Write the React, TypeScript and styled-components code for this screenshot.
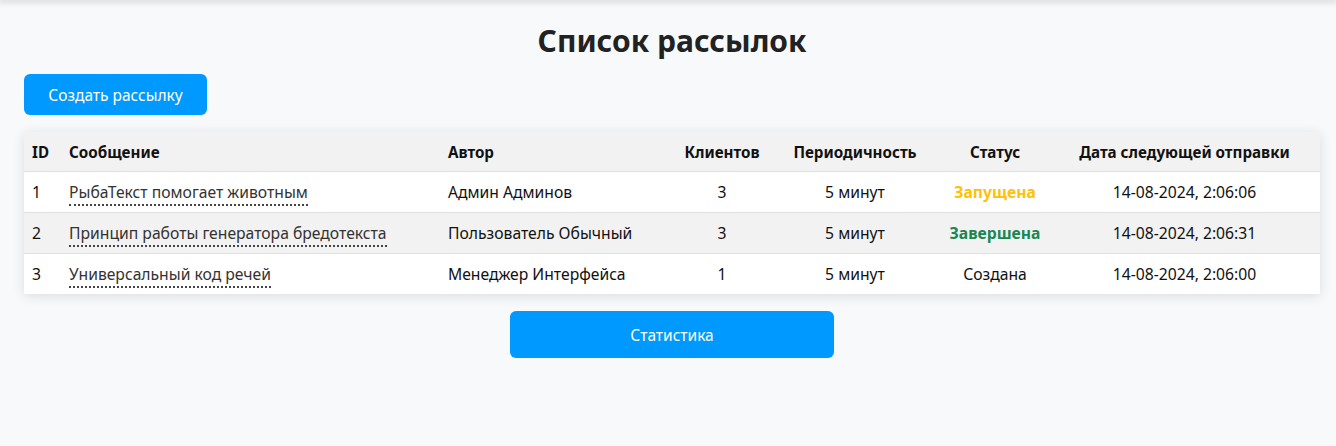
import React from "react";
import styled, { createGlobalStyle } from "styled-components";

const Global = createGlobalStyle`
  html, body { margin: 0; padding: 0; background: #f8f9fa; }
  body { font-family: "Noto Sans", "Open Sans", sans-serif; color: #212529; }
`;

const TopShadow = styled.div`
  height: 0;
  box-shadow: 0 0 6px 2px rgba(0, 0, 0, 0.18);
`;

const Page = styled.main`
  padding: 18px 16px 40px 24px;
  display: flex;
  flex-direction: column;
`;

const Title = styled.h1`
  margin: 0 0 10px;
  text-align: center;
  font-size: 30px;
  font-weight: 700;
  line-height: 46px;
  color: #222;
`;

const Button = styled.button<{ $wide?: boolean }>`
  border: none;
  border-radius: 6px;
  background: #0099ff;
  color: #fff;
  font-family: inherit;
  font-size: 15.5px;
  cursor: pointer;
  height: ${(p) => (p.$wide ? "47px" : "41px")};
  width: ${(p) => (p.$wide ? "324px" : "183px")};
  align-self: ${(p) => (p.$wide ? "center" : "flex-start")};
`;

const Table = styled.table`
  margin-top: 17px;
  width: 1296px;
  border-collapse: collapse;
  background: #fff;
  box-shadow: 0 2px 12px rgba(0, 0, 0, 0.12);
  font-size: 15.7px;
  table-layout: fixed;
`;

const Th = styled.th<{ $center?: boolean }>`
  background: #f2f2f2;
  height: 39px;
  padding: 0 8px;
  font-size: 15.2px;
  font-weight: 700;
  text-align: ${(p) => (p.$center ? "center" : "left")};
  border-bottom: 1px solid #dde0e4;
  color: #111;
`;

const Row = styled.tr<{ $alt?: boolean }>`
  background: ${(p) => (p.$alt ? "#f2f2f2" : "#fff")};
  &:not(:last-child) > td { border-bottom: 1px solid #dde0e4; }
`;

const Td = styled.td<{ $center?: boolean }>`
  height: 40px;
  padding: 0 8px;
  text-align: ${(p) => (p.$center ? "center" : "left")};
  color: #111;
`;

const MsgLink = styled.span`
  color: #333;
  border-bottom: 2px dotted #444;
  padding-bottom: 1px;
`;

const Status = styled.span<{ $kind: "run" | "done" | "new" }>`
  font-weight: ${(p) => (p.$kind === "new" ? 400 : 700)};
  color: ${(p) =>
    p.$kind === "run" ? "#ffc107" : p.$kind === "done" ? "#198754" : "#111"};
`;

const Footer = styled.div`
  margin-top: 17px;
  display: flex;
  justify-content: center;
`;

const rows = [
  { id: 1, msg: "РыбаТекст помогает животным", author: "Админ Админов", clients: 3, status: "run" as const, statusText: "Запущена", date: "14-08-2024, 2:06:06" },
  { id: 2, msg: "Принцип работы генератора бредотекста", author: "Пользователь Обычный", clients: 3, status: "done" as const, statusText: "Завершена", date: "14-08-2024, 2:06:31" },
  { id: 3, msg: "Универсальный код речей", author: "Менеджер Интерфейса", clients: 1, status: "new" as const, statusText: "Создана", date: "14-08-2024, 2:06:00" },
];

export default function App() {
  return (
    <>
      <Global />
      <TopShadow />
      <Page>
        <Title>Список рассылок</Title>
        <Button>Создать рассылку</Button>
        <Table>
          <colgroup>
            <col style={{ width: 37 }} />
            <col style={{ width: 379 }} />
            <col style={{ width: 235 }} />
            <col style={{ width: 94 }} />
            <col style={{ width: 172 }} />
            <col style={{ width: 108 }} />
            <col style={{ width: 271 }} />
          </colgroup>
          <thead>
            <tr>
              <Th>ID</Th>
              <Th>Сообщение</Th>
              <Th>Автор</Th>
              <Th $center>Клиентов</Th>
              <Th $center>Периодичность</Th>
              <Th $center>Статус</Th>
              <Th $center>Дата следующей отправки</Th>
            </tr>
          </thead>
          <tbody>
            {rows.map((r, i) => (
              <Row key={r.id} $alt={i % 2 === 1}>
                <Td>{r.id}</Td>
                <Td><MsgLink>{r.msg}</MsgLink></Td>
                <Td>{r.author}</Td>
                <Td $center>{r.clients}</Td>
                <Td $center>5 минут</Td>
                <Td $center><Status $kind={r.status}>{r.statusText}</Status></Td>
                <Td $center>{r.date}</Td>
              </Row>
            ))}
          </tbody>
        </Table>
        <Footer>
          <Button $wide>Статистика</Button>
        </Footer>
      </Page>
    </>
  );
}
